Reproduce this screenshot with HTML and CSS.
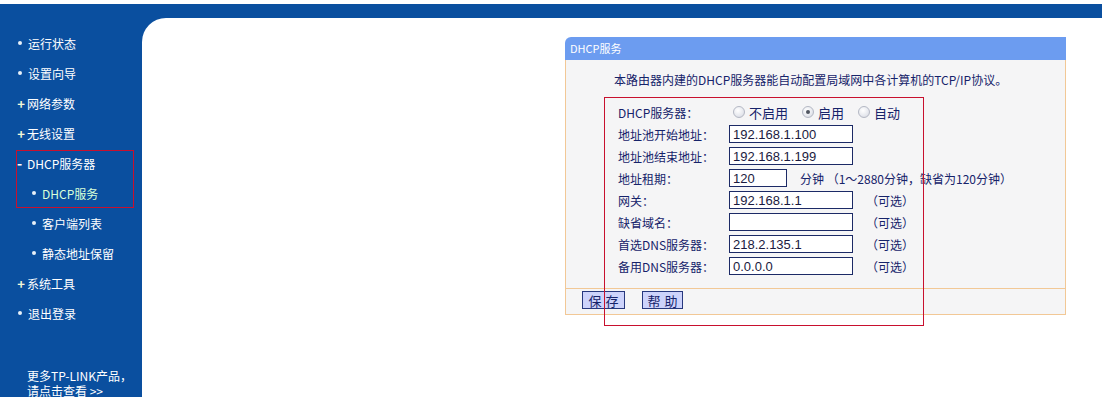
FILE: index.html
```html
<!DOCTYPE html>
<html>
<head>
  <meta charset="utf-8">
  <title>DHCP服务</title>
  <link rel="stylesheet" href="styles.css">
</head>
<body>

  <div class="topline"></div>

  <div class="frame">
    <!-- left menu -->
    <nav class="menu">
      <ul class="menu-list">
        <li class="dot">运行状态</li>
        <li class="dot">设置向导</li>
        <li class="plus">网络参数</li>
        <li class="plus">无线设置</li>
        <li class="minus">DHCP服务器</li>
        <li class="dot sub active">DHCP服务</li>
        <li class="dot sub">客户端列表</li>
        <li class="dot sub">静态地址保留</li>
        <li class="plus">系统工具</li>
        <li class="dot">退出登录</li>
      </ul>
      <p class="more">更多TP-LINK产品，<br>请点击查看 &gt;&gt;</p>
      <div class="mark mark-menu"></div>
    </nav>

    <main class="content">
      <div class="panel">
        <div class="panel-head">DHCP服务</div>
        <div class="panel-body">
          <p class="intro">本路由器内建的DHCP服务器能自动配置局域网中各计算机的TCP/IP协议。</p>

          <div class="form">
            <div class="label">DHCP服务器：</div>
            <div class="field">
              <span class="radio"></span><span class="opt">不启用</span>
              <span class="radio on"></span><span class="opt">启用</span>
              <span class="radio"></span><span class="opt">自动</span>
            </div>

            <div class="label">地址池开始地址：</div>
            <div class="field"><input class="box" type="text" value="192.168.1.100"></div>

            <div class="label">地址池结束地址：</div>
            <div class="field"><input class="box" type="text" value="192.168.1.199"></div>

            <div class="label">地址租期：</div>
            <div class="field">
              <input class="box short" type="text" value="120">
              <span class="unit">分钟 （1～2880分钟，缺省为120分钟）</span>
            </div>

            <div class="label">网关：</div>
            <div class="field"><input class="box" type="text" value="192.168.1.1"><span class="note">（可选）</span></div>

            <div class="label">缺省域名：</div>
            <div class="field"><input class="box" type="text" value=""><span class="note">（可选）</span></div>

            <div class="label">首选DNS服务器：</div>
            <div class="field"><input class="box" type="text" value="218.2.135.1"><span class="note">（可选）</span></div>

            <div class="label">备用DNS服务器：</div>
            <div class="field"><input class="box" type="text" value="0.0.0.0"><span class="note">（可选）</span></div>
          </div>

          <div class="actions">
            <button class="btn save">保存</button>
            <button class="btn help">帮助</button>
          </div>
        </div>
      </div>
      <div class="mark mark-main"></div>
    </main>
  </div>

</body>
</html>
```

FILE: styles.css
```css
html, body {
  margin: 0;
  padding: 0;
  background-color: #ffffff;
}

body {
  font-family: "Noto Sans CJK SC", "DejaVu Sans", sans-serif;
  font-size: 12px;
  height: 397px;
  overflow: hidden;
}

.topline {
  height: 4px;
  background-color: #ffffff;
}

.frame {
  display: flex;
  height: 393px;
  background-color: #0a4f9f; /* router blue */
}

/* ---------- left menu ---------- */
.menu {
  position: relative;
  width: 142px;
  flex-shrink: 0;
  color: #ffffff;
}

.menu-list {
  list-style: none;
  margin: 0;
  padding: 24px 0 0 0;
}

.menu-list li {
  display: flex;
  align-items: center;
  height: 30px;
  padding-left: 16px;
  white-space: nowrap;
}

.menu-list li::before {
  display: inline-block;
  width: 10px;
  text-align: center;
  margin-right: 1px;
  font-weight: bold;
}

.menu-list .dot::before {
  content: "";
  width: 4px;
  height: 4px;
  margin: 0 6px 0 2px;
  border-radius: 50%;
  background-color: #e8f0f8;
}

.menu-list .plus::before {
  content: "+";
  color: #f4f8d8;
  font-size: 13px;
}

.menu-list .minus::before {
  content: "-";
  color: #ffffff;
  font-size: 14px;
  width: 7px;
  text-align: left;
  margin-left: 1px;
  margin-right: 3px;
}

.menu-list .sub {
  padding-left: 30px;
}

.menu-list .active {
  color: #d8ffd8;
}

.more {
  margin: 40px 0 0 27px;
  line-height: 15px;
  color: #ffffff;
}

/* red annotation boxes */
.mark {
  position: absolute;
  box-sizing: border-box;
  border: 1px solid #c8102e;
  pointer-events: none;
}

.mark-menu {
  left: 16px;
  top: 146px;
  width: 118px;
  height: 58px;
}

/* ---------- content ---------- */
.content {
  position: relative;
  flex: 1;
  margin-top: 14px;
  background-color: #ffffff;
  border-top-left-radius: 24px;
}

.mark-main {
  left: 462px;
  top: 79px;
  width: 320px;
  height: 229px;
}

.panel {
  width: 501px;
  margin: 19px 0 0 423px;
  color: #16236a;
}

.panel-head {
  height: 23px;
  line-height: 23px;
  padding-left: 5px;
  background-color: #6c9cf0;
  color: #ffffff;
  font-size: 11px;
  border-top-left-radius: 6px;
}

.panel-body {
  background-color: #f5f5f6;
  border: 1px solid #f2c896;
  border-top: none;
}

.intro {
  margin: 0;
  padding: 12px 0 0 48px;
  line-height: 16px;
  white-space: nowrap;
}

.form {
  display: grid;
  grid-template-columns: 111px auto;
  grid-auto-rows: 22px;
  margin: 13px 0 11px 52px;
}

.label,
.field {
  display: flex;
  align-items: center;
  white-space: nowrap;
}

.box {
  box-sizing: border-box;
  width: 124px;
  height: 18px;
  margin: 0;
  padding: 0 3px;
  border: 1px solid #1c2a66;
  background-color: #ffffff;
  color: #1a1a40;
  font-family: "Liberation Sans", Arial, sans-serif;
  font-size: 13px;
}

.box.short {
  width: 58px;
}

.unit {
  margin-left: 13px;
}

.note {
  margin-left: 13px;
}

.radio {
  box-sizing: border-box;
  display: inline-block;
  position: relative;
  width: 12px;
  height: 12px;
  margin: 0 4px 0 4px;
  border-radius: 50%;
  border: 1px solid #b4b8c4;
  background: radial-gradient(circle at 40% 35%, #ffffff 0%, #e6e8ee 60%, #cfd2da 100%);
}

.radio.on::after {
  content: "";
  position: absolute;
  left: 3px;
  top: 3px;
  width: 4px;
  height: 4px;
  border-radius: 50%;
  background-color: #505560;
}

.opt {
  margin-right: 10px;
  font-size: 13px;
}

.actions {
  display: flex;
  align-items: flex-start;
  gap: 17px;
  height: 25px;
  padding-left: 16px;
  border-top: 1px solid #f2c896;
}

.btn {
  box-sizing: border-box;
  height: 18px;
  margin-top: 2px;
  padding: 0;
  border: 1px solid #27387e;
  background-color: #cdd3fb;
  color: #16236a;
  font-family: "Noto Sans CJK SC", sans-serif;
  font-size: 13px;
  line-height: 15px;
  letter-spacing: 4px;
  text-indent: 4px;
}

.btn.save {
  width: 43px;
}

.btn.help {
  width: 41px;
}
```
